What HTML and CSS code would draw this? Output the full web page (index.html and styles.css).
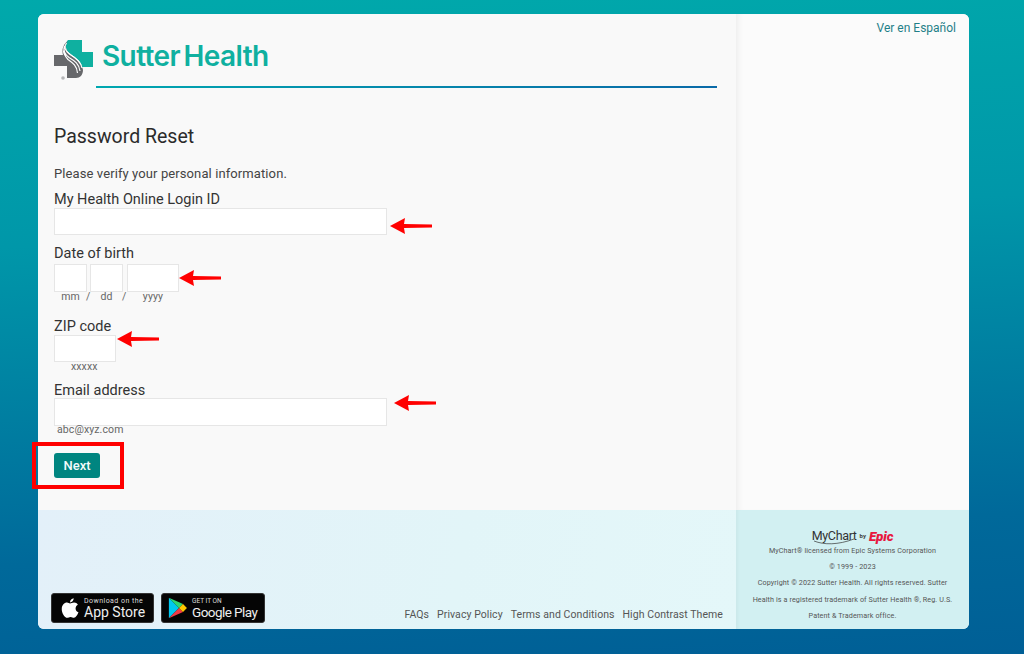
FILE: index.html
```html
<!DOCTYPE html>
<html lang="en">
<head>
<meta charset="utf-8">
<title>Password Reset</title>
<link rel="stylesheet" href="styles.css">
</head>
<body>
<div class="card">
  <main class="main">
    <div class="logo-row">
      <svg class="logo-mark" viewBox="0 0 40 40" width="40" height="40">
        <path d="M14 0H28V12H39V27H28C27 20 20 17 14 12 11 8 11 3 14 0Z" fill="#0fb0a0"/>
        <path d="M14 1C8 5 8 11 9 15H0V26H13V38H22C26 38 29 35 29 30 28 22 20 18 14 13 11 9 11 4 14 1Z" fill="#67686b"/>
        <path d="M12.500 3C9.500 7 11 11 16 14.500 22 18 27 22 28 28M10.500 6C9 10 10.500 14 15 17.500 21 21 25 24 26 31M9.500 10.500C9.500 14 11 16 14 19.500 19 23 23 26 23.500 33" fill="none" stroke="#fff" stroke-width="1.200"/>
        <circle cx="9" cy="38" r="1.800" fill="#b5b6b8"/>
      </svg>
      <span class="logo-text">Sutter Health</span>
    </div>
    <div class="logo-rule"></div>
    <h1 class="title">Password Reset</h1>
    <p class="intro">Please verify your personal information.</p>
    <form class="form">
      <label class="label label-login">My Health Online Login ID</label>
      <div class="input input-wide"></div>
      <label class="label label-dob">Date of birth</label>
      <div class="dob">
        <div class="part"><div class="input input-mm"></div><span class="hint">mm</span></div>
        <span class="slash">/</span>
        <div class="part"><div class="input input-dd"></div><span class="hint">dd</span></div>
        <span class="slash slash-wide">/</span>
        <div class="part"><div class="input input-yyyy"></div><span class="hint">yyyy</span></div>
      </div>
      <label class="label label-zip">ZIP code</label>
      <div class="input input-zip"></div>
      <span class="hint hint-zip">xxxxx</span>
      <label class="label label-email">Email address</label>
      <div class="input input-wide input-email"></div>
      <span class="hint hint-email">abc@xyz.com</span>
      <button class="next" type="button">Next</button>
    </form>
  </main>
  <aside class="side">
    <a class="lang">Ver en Español</a>
  </aside>
  <footer class="foot">
    <div class="badges">
      <div class="badge badge-apple">
        <svg class="badge-icon" viewBox="0 0 24 28" width="18" height="22"><path fill="#fff" d="M17 1c0 3-2.500 5.500-5 5.500C12 3.500 14.500 1.300 17 1zM12 8c1.500 0 3-1.300 5.500-1.300 2 0 4 1 5 2.800-4.500 2.500-3.700 8.500.8 10.200-1 2.800-3.500 7.300-6 7.300-1.700 0-2.500-1.100-4.500-1.100s-3 1.100-4.500 1.100C5 27 1 20.500 1 15.500 1 10 4.500 6.800 8 6.800 9.700 6.800 11 8 12 8z"/></svg>
        <div class="badge-text"><span class="badge-small">Download on the</span><span class="badge-big">App Store</span></div>
      </div>
      <div class="badge badge-google">
        <svg class="badge-icon" viewBox="0 0 24 28" width="19" height="22">
          <path fill="#00c8f0" d="M1 1v26l13-13z"/>
          <path fill="#2fd573" d="M1 1l13 13 5-5z"/>
          <path fill="#f03a45" d="M1 27l13-13 5 5z"/>
          <path fill="#ffc800" d="M19 9l-5 5 5 5 5-5z"/>
        </svg>
        <div class="badge-text"><span class="badge-small badge-small-g">GET IT ON</span><span class="badge-big badge-big-g">Google Play</span></div>
      </div>
    </div>
    <nav class="links"><a>FAQs</a><a>Privacy Policy</a><a>Terms and Conditions</a><a>High Contrast Theme</a></nav>
  </footer>
  <div class="legal">
    <div class="mychart">
      <span class="mc-name">MyChart<svg class="mc-swoosh" viewBox="0 0 44 8" width="44" height="8"><path d="M2 3C12 7 26 7 42 1" fill="none" stroke="#333" stroke-width=".7"/></svg></span>
      <span class="mc-by">by</span><span class="mc-epic">Epic</span>
    </div>
    <p>MyChart® licensed from Epic Systems Corporation</p>
    <p>© 1999 - 2023</p>
    <p>Copyright © 2022 Sutter Health. All rights reserved. Sutter Health is a registered trademark of Sutter Health ®, Reg. U.S. Patent &amp; Trademark office.</p>
  </div>
</div>
<svg class="arrow arrow-1" viewBox="0 0 42 16" width="42" height="16"><path d="M0 8 15 0 14 6 42 6.500V9.500L14 10 15 16Z" fill="#f00"/></svg>
<svg class="arrow arrow-2" viewBox="0 0 42 16" width="42" height="16"><path d="M0 8 15 0 14 6 42 6.500V9.500L14 10 15 16Z" fill="#f00"/></svg>
<svg class="arrow arrow-3" viewBox="0 0 42 16" width="42" height="16"><path d="M0 8 15 0 14 6 42 6.500V9.500L14 10 15 16Z" fill="#f00"/></svg>
<svg class="arrow arrow-4" viewBox="0 0 42 16" width="42" height="16"><path d="M0 8 15 0 14 6 42 6.500V9.500L14 10 15 16Z" fill="#f00"/></svg>
<div class="redbox"></div>
</body>
</html>
```
FILE: styles.css
```css
* { box-sizing: border-box; }
html, body { margin: 0; height: 654px; overflow: hidden; }
body {
  position: relative;
  padding: 14px 55px 25px 38px;
  background: linear-gradient(177deg, #00a9ab 0%, #0097a9 35%, #00699a 80%, #005f96 100%);
  font-family: Roboto, "Liberation Sans", sans-serif;
  color: #333;
}
.card {
  display: grid;
  grid-template-columns: 698px 233px;
  grid-template-rows: 496px 119px;
  height: 615px;
  border-radius: 6px;
  overflow: hidden;
  background: #fafafa;
}
.main { padding: 26px 0 0 16px; background: #f9f9f9; }
.logo-row { display: flex; align-items: center; height: 40px; gap: 8px; }
.logo-mark { display: block; flex: none; }
.logo-text { font-family: Inter, sans-serif; font-size: 28px; font-weight: 600; letter-spacing: -0.6px; word-spacing: -3px; color: #0fb0a0; position: relative; top: -4px; }
.logo-rule { height: 2px; margin: 6px 19px 0 42px; background: linear-gradient(90deg, #00a8b0, #0a6aa8); }
.title { margin: 37px 0 0; font-size: 19.500px; line-height: 24px; font-weight: 400; color: #2b2b2b; }
.intro { margin: 16px 0 0; font-size: 13px; line-height: 18px; letter-spacing: 0.1px; color: #444; }
.form { display: flex; flex-direction: column; align-items: flex-start; }
.label { font-size: 14.500px; line-height: 20px; margin-bottom: -2px; color: #333; }
.label-login { margin-top: 7px; }
.label-dob { margin-top: 9px; }
.label-zip { margin-top: 8px; }
.label-email { margin-top: 9px; margin-bottom: -3px; }
.input { height: 27px; background: #fff; border: 1px solid #e6e6e6; }
.input-wide { width: 333px; }
.input-email { height: 28px; }
.input-mm, .input-dd { width: 33px; height: 28px; }
.input-yyyy { width: 52px; height: 28px; }
.input-zip { width: 62px; }
.dob { display: flex; height: 45px; margin-top: 2px; }
.part { display: flex; flex-direction: column; align-items: center; }
.slash { width: 3px; margin-top: 28px; text-indent: -1px; font-size: 10.500px; line-height: 10px; color: #666; }
.slash-wide { width: 4px; }
.hint { font-size: 10.500px; line-height: 10px; letter-spacing: 0.1px; color: #666; }
.hint-zip { margin-left: 17px; }
.hint-email { margin-left: 3px; margin-top: -1px; }
.next {
  margin-top: 18px;
  width: 46px;
  height: 25px;
  padding: 0;
  border: 0;
  border-radius: 3px;
  background: #008580;
  color: #f4fbfb;
  font: 500 13px Roboto, sans-serif;
}
.side { background: #fbfbfb; box-shadow: inset 6px 0 6px -4px rgba(0,0,0,0.06); padding: 7px 13px 0 0; text-align: right; }
.lang { display: block; font-size: 12px; line-height: 15px; color: #1f7f88; }
.foot {
  display: flex;
  justify-content: space-between;
  align-items: flex-end;
  padding: 0 13px 6px 13px;
  background: linear-gradient(100deg, #e3f0f9 0%, #e2f5f8 60%, #e4f7f9 100%);
}
.badges { display: flex; gap: 7px; }
.badge { display: flex; align-items: center; gap: 5px; height: 30px; border-radius: 3px; background: #050505; color: #fff; padding: 0 9px; border: 1px solid #333; }
.badge-apple { width: 103px; }
.badge-google { width: 104px; padding-left: 6px; }
.badge-icon { flex: none; }
.badge-text { display: flex; flex-direction: column; }
.badge-small { font-size: 7px; line-height: 8px; letter-spacing: 0.45px; color: #ddd; white-space: nowrap; }
.badge-big { font-size: 14px; line-height: 15px; white-space: nowrap; color: #eee; }
.badge-small-g { font-size: 6.500px; letter-spacing: 0; }
.badge-big-g { font-size: 13.500px; letter-spacing: -0.55px; }
.links { display: flex; gap: 8px; margin-bottom: 2px; font-size: 10.500px; line-height: 13px; letter-spacing: 0.07px; color: #555; }
.legal {
  padding: 19px 14px 0;
  background: #d2f0f2;
  box-shadow: inset 4px 0 4px -3px rgba(0,0,0,0.05);
  text-align: center;
  font-size: 7.200px;
  color: #555;
}
.legal p { margin: 0; line-height: 16.200px; letter-spacing: 0.1px; }
.mychart { display: flex; justify-content: center; align-items: center; gap: 3px; height: 13px; margin-bottom: 1px; }
.mc-name { position: relative; font-size: 12.500px; letter-spacing: -0.35px; color: #333; }
.mc-swoosh { position: absolute; left: 0; bottom: -3px; }
.mc-by { font-size: 6px; font-weight: 700; color: #444; }
.mc-epic { font-size: 13.500px; font-weight: 900; font-style: italic; letter-spacing: -0.2px; color: #e8173f; }
.arrow { position: absolute; }
.arrow-1 { left: 390px; top: 218px; }
.arrow-2 { left: 179px; top: 270px; }
.arrow-3 { left: 117px; top: 331px; }
.arrow-4 { left: 394px; top: 395px; }
.redbox { position: absolute; left: 32px; top: 442px; width: 92px; height: 47px; border: 4px solid #f00; }
```
